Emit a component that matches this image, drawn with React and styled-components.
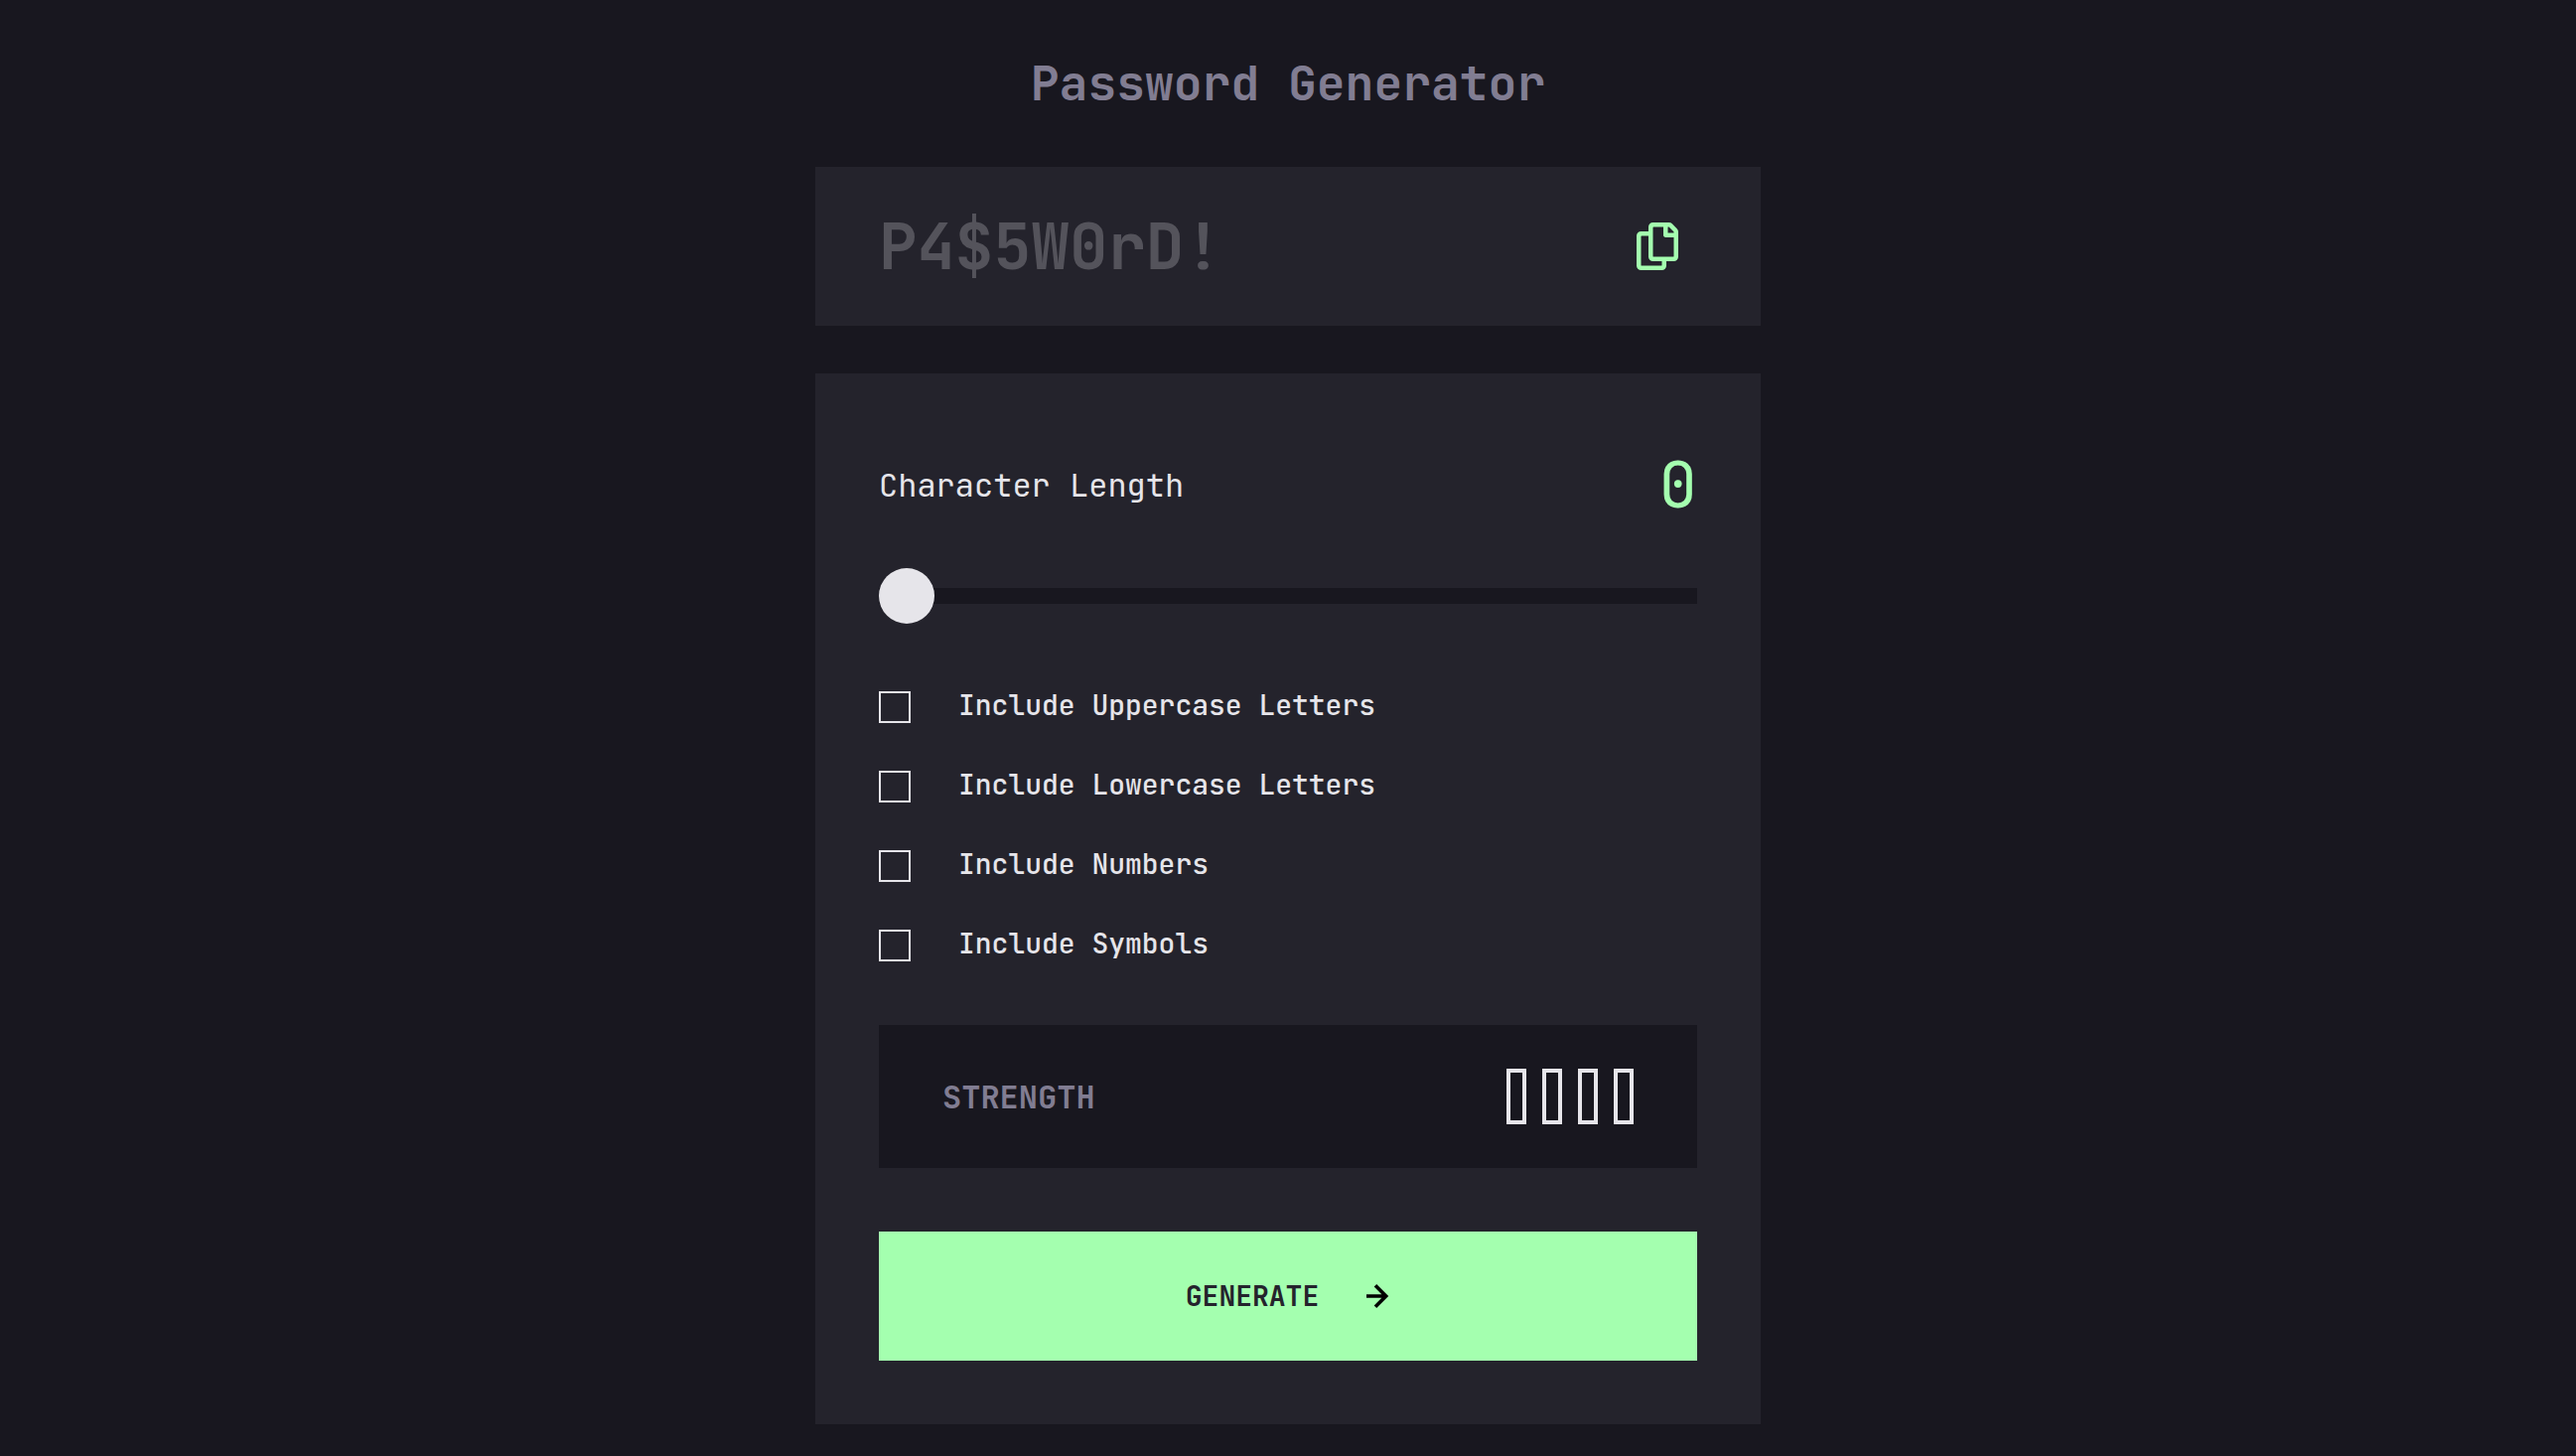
import React, {useState} from 'react';
import styled, {createGlobalStyle} from 'styled-components';

const GlobalStyle = createGlobalStyle`
    * {
        box-sizing: border-box;
    }
    body {
        margin: 0;
        background-color: #18171f;
        color: #e6e5ea;
        font-family: 'JetBrains Mono', 'DejaVu Sans Mono', monospace;
    }
    button, input {
        font-family: inherit;
    }
`

const Page = styled.main`
    width: 100%;
    max-width: 952px;
    margin: 0 auto;
    padding: 52px 0 32px;
`

const Title = styled.h1`
    margin: 0 0 52px;
    font-size: 48px;
    line-height: 64px;
    font-weight: 700;
    text-align: center;
    color: #817d92;
`

const PasswordBar = styled.div`
    display: flex;
    align-items: center;
    justify-content: space-between;
    height: 160px;
    margin-bottom: 48px;
    padding: 0 64px;
    background-color: #24232c;
`

const PasswordField = styled.input`
    flex: 1;
    min-width: 0;
    height: 96px;
    padding: 0;
    border: 0;
    outline: none;
    background: none;
    color: #e6e5ea;
    font-size: 64px;
    font-weight: 700;
    &::placeholder {
        color: #54535b;
        opacity: 1;
    }
`

const CopyButton = styled.button`
    display: flex;
    align-items: center;
    justify-content: center;
    width: 80px;
    height: 80px;
    padding: 0;
    border: 0;
    background: none;
    color: #a4ffaf;
    cursor: pointer;
`

const Panel = styled.form`
    padding: 64px;
    background-color: #24232c;
`

const LengthRow = styled.div`
    display: flex;
    align-items: center;
    justify-content: space-between;
    height: 96px;
    margin-bottom: 36px;
`

const LengthLabel = styled.label`
    font-size: 32px;
`

const LengthValue = styled.output`
    font-size: 64px;
    color: #a4ffaf;
`

const Slider = styled.input`
    display: block;
    appearance: none;
    width: 100%;
    height: 56px;
    margin: 0 0 68px;
    background: none;
    cursor: pointer;
    &::-webkit-slider-runnable-track {
        height: 16px;
        background-color: #18171f;
    }
    &::-webkit-slider-thumb {
        appearance: none;
        width: 56px;
        height: 56px;
        margin-top: -20px;
        border-radius: 50%;
        background-color: #e6e5ea;
    }
`

const Options = styled.div`
    display: flex;
    flex-direction: column;
    gap: 48px;
    margin-bottom: 64px;
`

const Option = styled.label`
    display: flex;
    align-items: flex-start;
    gap: 48px;
    font-size: 28px;
    line-height: 28px;
    font-weight: 500;
    cursor: pointer;
`

const CheckBox = styled.input`
    appearance: none;
    width: 32px;
    height: 32px;
    margin: 0;
    border: 2px solid #e6e5ea;
    &:checked {
        border-color: #a4ffaf;
        background-color: #a4ffaf;
    }
`

const Strength = styled.div`
    display: flex;
    align-items: center;
    justify-content: space-between;
    height: 144px;
    margin-bottom: 64px;
    padding: 0 64px;
    background-color: #18171f;
`

const StrengthLabel = styled.span`
    font-size: 32px;
    font-weight: 700;
    color: #817d92;
`

const Bars = styled.div`
    display: flex;
    gap: 16px;
`

const Bar = styled.div`
    width: 20px;
    height: 56px;
    border: 4px solid ${props => props.$on ? '#a4ffaf' : '#e6e5ea'};
    background-color: ${props => props.$on ? '#a4ffaf' : 'transparent'};
`

const GenerateButton = styled.button`
    display: flex;
    align-items: center;
    justify-content: center;
    gap: 48px;
    width: 100%;
    height: 130px;
    border: 0;
    background-color: #a4ffaf;
    color: #24232c;
    font-size: 28px;
    line-height: 36px;
    font-weight: 700;
    cursor: pointer;
`

const CopyIcon = () => (
    <svg width="42" height="48" viewBox="0 0 21 24" fill="currentColor" aria-hidden="true">
        <path d="M20.341 3.091 17.909.659A2.25 2.25 0 0 0 16.319 0H8.25A2.25 2.25 0 0 0 6 2.25V4.5H2.25A2.25 2.25 0 0 0 0 6.75v15A2.25 2.25 0 0 0 2.25 24h10.5A2.25 2.25 0 0 0 15 21.75V19.5h3.75A2.25 2.25 0 0 0 21 17.25V4.682a2.25 2.25 0 0 0-.659-1.591ZM12.469 21.75H2.53a.281.281 0 0 1-.281-.281V7.03a.281.281 0 0 1 .281-.281H6v10.5a2.25 2.25 0 0 0 2.25 2.25h4.5v1.969a.282.282 0 0 1-.281.281Zm6-4.5H8.53a.281.281 0 0 1-.281-.281V2.53a.281.281 0 0 1 .281-.281H13.5v4.125c0 .621.504 1.125 1.125 1.125h4.125v9.469a.281.281 0 0 1-.281.281Zm.281-12h-3V2.25h.451c.075 0 .147.03.2.082L18.667 4.6a.281.281 0 0 1 .083.199v.451Z" />
    </svg>
)

const ArrowIcon = () => (
    <svg width="24" height="24" viewBox="0 0 12 12" fill="#000" aria-hidden="true">
        <path d="m5.106 12 6-6-6-6-1.265 1.265 3.841 3.84H.001v1.79h7.681l-3.841 3.84z" />
    </svg>
)

const optionList = [
    {id: 'upper', text: 'Include Uppercase Letters', chars: 'ABCDEFGHIJKLMNOPQRSTUVWXYZ'},
    {id: 'lower', text: 'Include Lowercase Letters', chars: 'abcdefghijklmnopqrstuvwxyz'},
    {id: 'numbers', text: 'Include Numbers', chars: '0123456789'},
    {id: 'symbols', text: 'Include Symbols', chars: '!@#$%^&*()_+-=?'},
];

export default function App() {
    const [password, setPassword] = useState('');
    const [length, setLength] = useState(0);
    const [picked, setPicked] = useState({});
    const count = optionList.filter(o => picked[o.id]).length;

    const generate = (e) => {
        e.preventDefault();
        const pool = optionList.filter(o => picked[o.id]).map(o => o.chars).join('');
        let result = '';
        //nothing ticked leaves the field empty
        for (let i = 0; pool && i < length; i++) {
            result += pool[Math.floor(Math.random() * pool.length)];
        }
        setPassword(result);
    };

    return (
        <Page>
            <GlobalStyle />
            <Title>Password Generator</Title>
            <PasswordBar>
                <PasswordField type="text" readOnly aria-label="Password" placeholder="P4$5W0rD!" value={password} />
                <CopyButton type="button" aria-label="Copy password" onClick={() => navigator.clipboard.writeText(password)}>
                    <CopyIcon />
                </CopyButton>
            </PasswordBar>
            <Panel onSubmit={generate}>
                <LengthRow>
                    <LengthLabel htmlFor="length">Character Length</LengthLabel>
                    <LengthValue htmlFor="length">{length}</LengthValue>
                </LengthRow>
                <Slider id="length" type="range" min="0" max="20" value={length} onChange={(e) => setLength(Number(e.target.value))} />
                <Options>
                    {optionList.map(o => (
                        <Option key={o.id} htmlFor={o.id}>
                            <CheckBox
                                id={o.id}
                                type="checkbox"
                                checked={!!picked[o.id]}
                                onChange={(e) => setPicked({...picked, [o.id]: e.target.checked})}
                            />
                            {o.text}
                        </Option>
                    ))}
                </Options>
                <Strength>
                    <StrengthLabel>STRENGTH</StrengthLabel>
                    <Bars>
                        {[1, 2, 3, 4].map(n => <Bar key={n} $on={n <= count} />)}
                    </Bars>
                </Strength>
                <GenerateButton type="submit">
                    GENERATE
                    <ArrowIcon />
                </GenerateButton>
            </Panel>
        </Page>
    )
}
